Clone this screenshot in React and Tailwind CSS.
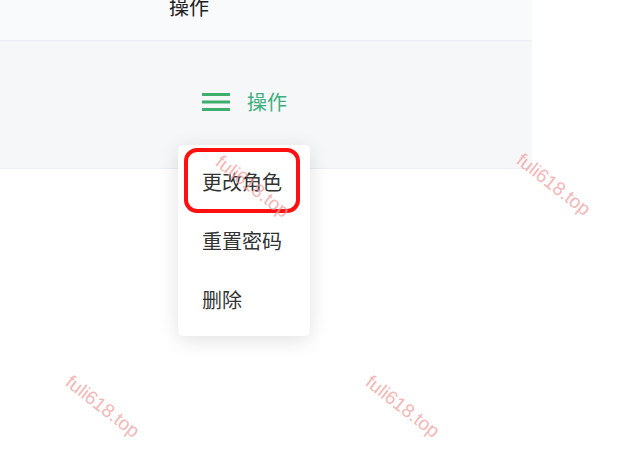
import React from 'react';

const font = { fontFamily: '"Noto Sans CJK SC", "Noto Sans", sans-serif' };

const Watermark = ({ className }) => (
  <div
    className={`absolute text-[19px] leading-none text-[#f0a0a0] opacity-75 rotate-[38deg] origin-top-left pointer-events-none ${className}`}
    style={{ fontFamily: '"Liberation Sans", Arial, sans-serif' }}
  >
    fuli618.top
  </div>
);

const MenuIcon = () => (
  <svg width="28" height="20" viewBox="0 0 28 20" className="shrink-0">
    <rect x="0" y="1" width="28" height="3" fill="#3daf6c" />
    <rect x="0" y="8.5" width="28" height="3" fill="#3daf6c" />
    <rect x="0" y="16" width="28" height="3" fill="#3daf6c" />
  </svg>
);

export default function App() {
  const items = ['更改角色', '重置密码', '删除'];

  return (
    <div className="relative w-[621px] h-[451px] bg-white overflow-hidden" style={font}>
      <div className="w-[532px]">
        <div className="h-[41px] bg-[#f9fafc] border-b border-[#ebeef5] overflow-hidden">
          <div className="pl-[169px] -mt-[5px] text-[20px] leading-[24px] text-[#222]">操作</div>
        </div>
        <div className="h-[128px] bg-[#f6f7f9] border-b border-[#ebeef5] flex items-center pl-[202px] pb-[5px]">
          <MenuIcon />
          <span className="ml-[17px] text-[20px] leading-none text-[#3daf7c]">操作</span>
        </div>
      </div>

      <div className="absolute left-[178px] top-[145px] w-[132px] h-[191px] bg-white rounded-[5px] shadow-[0_4px_20px_rgba(0,0,0,0.12)] pt-[7px] flex flex-col">
        {items.map((t) => (
          <div key={t} className="h-[59px] flex items-center pl-[24px] text-[20px] leading-none text-[#333]">
            {t}
          </div>
        ))}
      </div>

      <div className="absolute left-[184px] top-[148px] w-[116px] h-[65px] border-[4px] border-[#ff1010] rounded-[13px]" />

      <Watermark className="left-[224px] top-[152px]" />
      <Watermark className="left-[525px] top-[150px]" />
      <Watermark className="left-[74px] top-[372px]" />
      <Watermark className="left-[374px] top-[372px]" />
    </div>
  );
}
